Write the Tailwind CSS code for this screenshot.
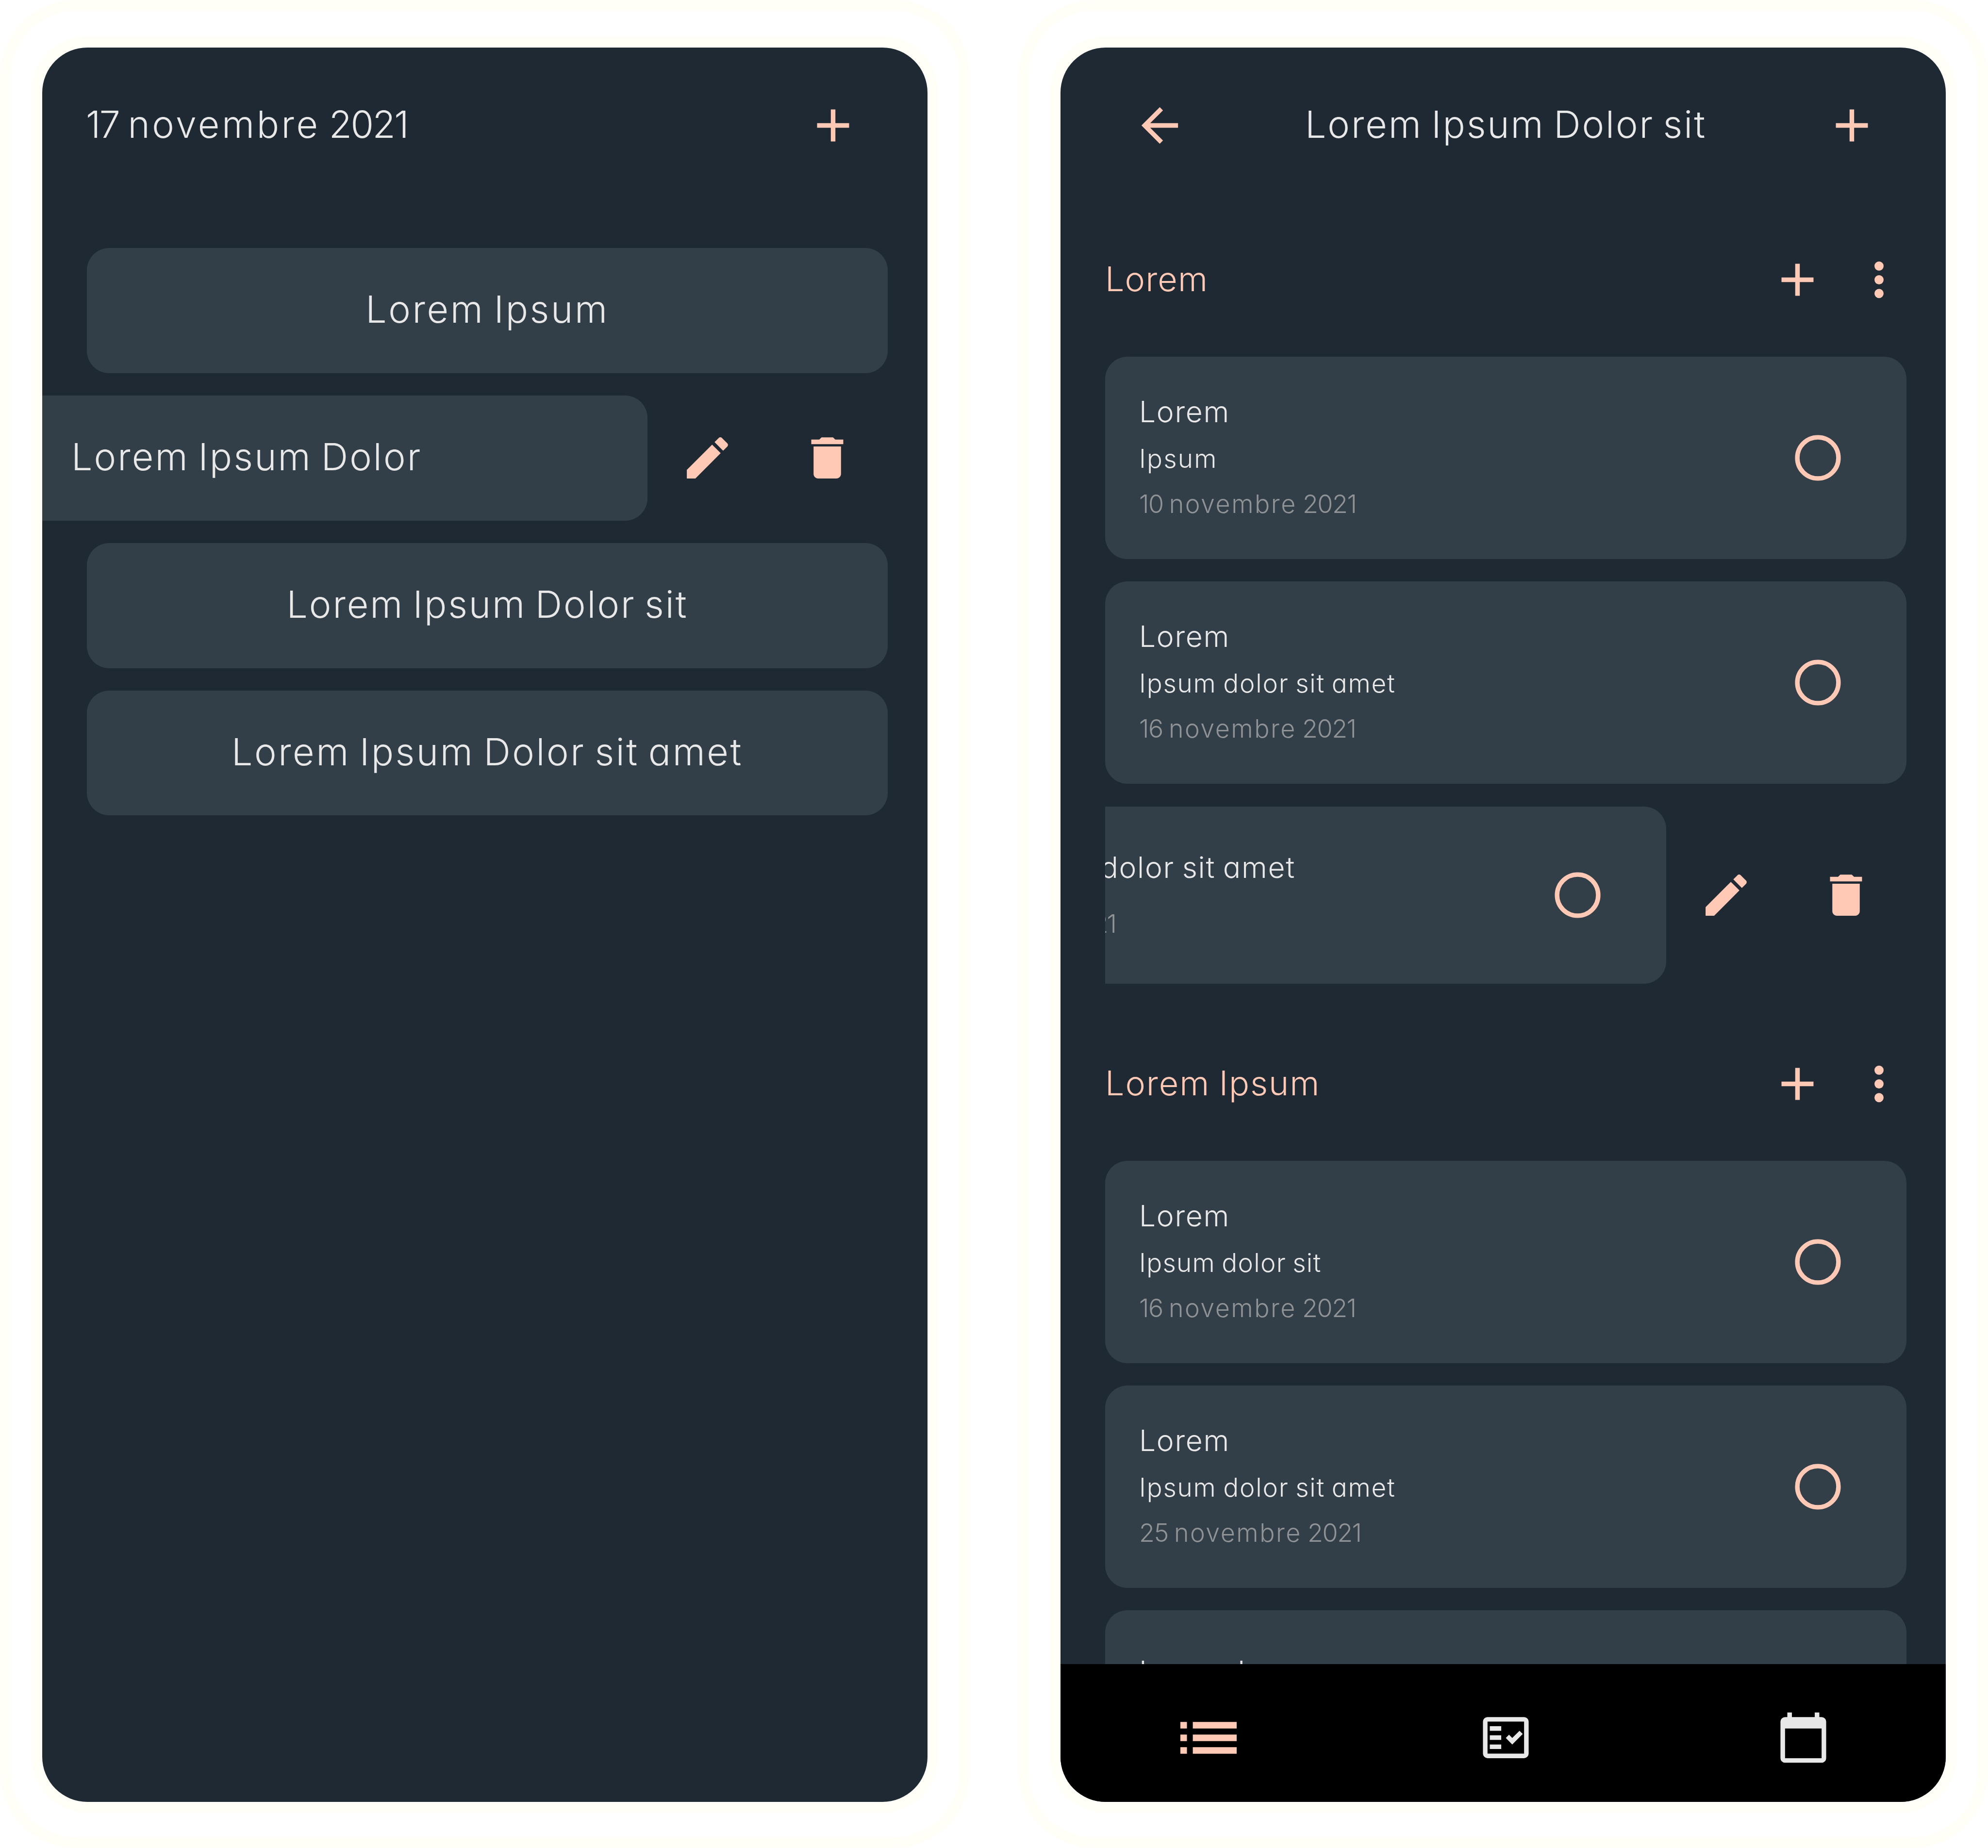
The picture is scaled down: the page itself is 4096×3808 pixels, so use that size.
<!DOCTYPE html>
<html lang="fr">
<head>
<meta charset="utf-8">
<title>Tasks</title>
<script src="https://cdn.jsdelivr.net/npm/@tailwindcss/browser@4"></script>
</head>
<body class="bg-white">
<svg class="hidden">
  <symbol id="add" viewBox="0 0 24 24"><path d="M19 13h-6v6h-2v-6H5v-2h6V5h2v6h6z"/></symbol>
  <symbol id="back" viewBox="0 0 24 24"><path d="M20 11H7.83l5.59-5.59L12 4l-8 8 8 8 1.41-1.41L7.83 13H20z"/></symbol>
  <symbol id="edit" viewBox="0 0 24 24"><path d="M3 17.25V21h3.75L17.81 9.94l-3.75-3.75zM20.71 7.04a1 1 0 0 0 0-1.41l-2.34-2.34a1 1 0 0 0-1.41 0l-1.83 1.83 3.75 3.75z"/></symbol>
  <symbol id="trash" viewBox="0 0 24 24"><path d="M6 19c0 1.100.9 2 2 2h8c1.100 0 2-.9 2-2V7H6zM19 4h-3.500l-1-1h-5l-1 1H5v2h14z"/></symbol>
  <symbol id="dots" viewBox="0 0 24 24"><circle cx="12" cy="6" r="2"/><circle cx="12" cy="12" r="2"/><circle cx="12" cy="18" r="2"/></symbol>
  <symbol id="circle" viewBox="0 0 24 24"><circle cx="12" cy="12" r="9" fill="none" stroke="currentColor" stroke-width="2"/></symbol>
</svg>

<div class="flex h-[3808px] w-[4096px] justify-between overflow-hidden font-[Inter,sans-serif] font-[300] text-[#e8e8e8] [font-feature-settings:'cv11']">

  <!-- Lists screen -->
  <div class="h-[3808px] w-[1998px] rounded-[156px] border-[22px] border-[#fffff7] bg-white px-[43px] pt-[53px] pb-[51px]">
    <div class="h-full rounded-[115px] bg-[#fffff7] px-[22px] pt-[23px] pb-[22px]">
      <div class="h-full overflow-hidden rounded-[93px] bg-[#1f2933]">
        <header class="flex h-[320px] items-center justify-between pr-[138px] pl-[90px]">
          <h1 class="pb-[5px] text-[77px] leading-[120px] tracking-[-2.5px] [word-spacing:-1px]">17 <span class="tracking-[4.5px]">novembre</span> 2021</h1>
          <svg class="size-[113px] fill-[#ffc9b5]"><use href="#add"/></svg>
        </header>
        <main class="mt-[92.500px] flex flex-col gap-[46.200px] text-[77px] leading-[120px] [word-spacing:-6px]">
          <div class="mr-[82px] ml-[92px] flex h-[258px] items-center justify-center rounded-[46px] bg-[#323e48] pb-[5px] tracking-[3.6px]">Lorem Ipsum</div>
          <div class="flex h-[258px] items-center text-[#ffc9b5]">
            <div class="flex h-full w-[1247px] items-center rounded-r-[46px] bg-[#323e48] pb-[5px] pl-[60px] tracking-[3.1px] text-[#e8e8e8]">Lorem Ipsum Dolor</div>
            <svg class="ml-[67px] size-[113px] fill-current"><use href="#edit"/></svg>
            <svg class="ml-[134px] size-[113px] fill-current"><use href="#trash"/></svg>
          </div>
          <div class="mr-[82px] ml-[92px] flex h-[258px] items-center justify-center rounded-[46px] bg-[#323e48] pb-[5px] tracking-[2.9px]">Lorem Ipsum Dolor sit</div>
          <div class="mr-[82px] ml-[92px] flex h-[257px] items-center justify-center rounded-[46px] bg-[#323e48] pb-[5px] tracking-[3.5px]">Lorem Ipsum Dolor sit amet</div>
        </main>
      </div>
    </div>
  </div>

  <!-- Tasks screen -->
  <div class="h-[3808px] w-[1998px] rounded-[156px] border-[22px] border-[#fffff7] bg-white px-[43px] pt-[53px] pb-[51px]">
    <div class="h-full rounded-[115px] bg-[#fffff7] px-[22px] pt-[23px] pb-[22px]">
      <div class="flex h-full flex-col overflow-hidden rounded-[93px] bg-[#1f2933]">
        <header class="flex h-[320px] shrink-0 items-center pr-[137px] pl-[148px]">
          <svg class="size-[113px] fill-[#ffc9b5]"><use href="#back"/></svg>
          <h1 class="flex-1 pb-[5px] text-center text-[77px] leading-[120px] tracking-[2.9px] [word-spacing:-6px]">Lorem Ipsum Dolor sit</h1>
          <svg class="size-[113px] fill-[#ffc9b5]"><use href="#add"/></svg>
        </header>

        <main class="min-h-0 flex-1 overflow-hidden pr-[81px] pl-[92px] [word-spacing:-3px]">
          <section class="mb-[48px] flex flex-col gap-[46.300px]">
            <div class="-mb-[46.300px] flex h-[317px] items-center text-[#ffc9b5]">
              <h2 class="flex-1 pb-[4px] text-[70px] leading-[100px] tracking-[1.1px]">Lorem</h2>
              <svg class="mr-[55px] size-[113px] fill-current"><use href="#add"/></svg>
              <svg class="size-[113px] fill-current"><use href="#dots"/></svg>
            </div>
            <article class="flex h-[417px] items-center justify-between rounded-[46px] bg-[#323e48] pr-[126px] pl-[70px]">
              <div class="h-full pt-[66px]">
                <p class="text-[60.500px] leading-[95px] tracking-[1.7px]">Lorem</p>
                <p class="text-[53px] leading-[98px] tracking-[2.2px]">Ipsum</p>
                <p class="text-[52px] leading-[89px] tracking-[-1.5px] text-[#909396] [word-spacing:-1px]">10 <span class="tracking-[2.5px]">novembre</span> 2021</p>
              </div>
              <svg class="size-[113px] text-[#ffc9b5]"><use href="#circle"/></svg>
            </article>
            <article class="flex h-[417px] items-center justify-between rounded-[46px] bg-[#323e48] pr-[126px] pl-[70px]">
              <div class="h-full pt-[66px]">
                <p class="text-[60.500px] leading-[95px] tracking-[1.7px]">Lorem</p>
                <p class="text-[53px] leading-[98px] tracking-[1.8px]">Ipsum dolor sit amet</p>
                <p class="text-[52px] leading-[89px] tracking-[-1.5px] text-[#909396] [word-spacing:-1px]">16 <span class="tracking-[2.5px]">novembre</span> 2021</p>
              </div>
              <svg class="size-[113px] text-[#ffc9b5]"><use href="#circle"/></svg>
            </article>
            <div class="flex h-[365px] items-center text-[#ffc9b5]">
              <article class="flex h-full w-[1156px] items-center justify-between overflow-hidden rounded-r-[46px] bg-[#323e48] pr-[126px]">
                <div class="-ml-[425px] h-full w-[817px] pt-[78px] whitespace-nowrap">
                  <p class="text-right text-[60.500px] leading-[94px] tracking-[1.7px] text-[#e8e8e8]">Lorem Ipsum dolor sit amet</p>
                  <p class="w-[446px] pt-[25px] text-right text-[52px] leading-[89px] tracking-[-3px] text-[#909396] [word-spacing:-1px]">16 <span class="tracking-[2.5px]">novembre</span> 2021</p>
                </div>
                <svg class="size-[113px]"><use href="#circle"/></svg>
              </article>
              <svg class="ml-[67px] size-[113px] fill-current"><use href="#edit"/></svg>
              <svg class="ml-[134px] size-[113px] fill-current"><use href="#trash"/></svg>
            </div>
          </section>

          <section class="flex flex-col gap-[46.300px]">
            <div class="-mb-[46.300px] flex h-[317px] items-center text-[#ffc9b5]">
              <h2 class="flex-1 pb-[3px] text-[70px] leading-[100px] tracking-[1.9px]">Lorem Ipsum</h2>
              <svg class="mr-[55px] size-[113px] fill-current"><use href="#add"/></svg>
              <svg class="size-[113px] fill-current"><use href="#dots"/></svg>
            </div>
            <article class="flex h-[417px] items-center justify-between rounded-[46px] bg-[#323e48] pr-[126px] pl-[70px]">
              <div class="h-full pt-[66px]">
                <p class="text-[60.500px] leading-[95px] tracking-[1.7px]">Lorem</p>
                <p class="text-[53px] leading-[98px] tracking-[1.3px]">Ipsum dolor sit</p>
                <p class="text-[52px] leading-[89px] tracking-[-1.5px] text-[#909396] [word-spacing:-1px]">16 <span class="tracking-[2.5px]">novembre</span> 2021</p>
              </div>
              <svg class="size-[113px] text-[#ffc9b5]"><use href="#circle"/></svg>
            </article>
            <article class="flex h-[417px] items-center justify-between rounded-[46px] bg-[#323e48] pr-[126px] pl-[70px]">
              <div class="h-full pt-[66px]">
                <p class="text-[60.500px] leading-[95px] tracking-[1.7px]">Lorem</p>
                <p class="text-[53px] leading-[98px] tracking-[1.8px]">Ipsum dolor sit amet</p>
                <p class="text-[52px] leading-[89px] tracking-[-1.5px] text-[#909396] [word-spacing:-1px]">25 <span class="tracking-[2.5px]">novembre</span> 2021</p>
              </div>
              <svg class="size-[113px] text-[#ffc9b5]"><use href="#circle"/></svg>
            </article>
            <article class="h-[365px] rounded-[46px] bg-[#323e48] pt-[79px] pl-[70px]">
              <p class="text-[60.500px] leading-[94px] tracking-[1.7px]">Lorem Ipsum</p>
            </article>
          </section>
        </main>

        <nav class="-ml-[2px] flex h-[284px] shrink-0 bg-black pt-[19px]">
          <div class="flex w-[613px] shrink-0 items-center justify-center">
            <svg class="h-[66px] w-[116px] fill-[#ffc9b5]" viewBox="0 0 129 73"><path d="M0 0h15v15H0zM28.500 0H129v15H28.500zM0 29h15v15H0zM28.500 29H129v15H28.500zM0 58h15v15H0zM28.500 58H129v15H28.500z"/></svg>
          </div>
          <div class="flex w-[613px] shrink-0 items-center justify-center">
            <svg class="size-[113px] fill-[#e8e8e8]" viewBox="0 0 24 24"><path fill-rule="evenodd" d="M20 3H4a2 2 0 0 0-2 2v14a2 2 0 0 0 2 2h16a2 2 0 0 0 2-2V5a2 2 0 0 0-2-2zM4 5h16v14H4z"/><path d="M19.410 10.420 17.990 9l-3.170 3.170-1.410-1.420L12 12.160 14.820 15zM5 7h5v2H5zM5 11h5v2H5zM5 15h5v2H5z"/></svg>
          </div>
          <div class="flex w-[613px] shrink-0 items-center justify-center">
            <svg class="size-[113px] fill-[#e8e8e8]" viewBox="0 0 24 24"><path d="M20 3h-1V1h-2v2H7V1H5v2H4a2 2 0 0 0-2 2v16a2 2 0 0 0 2 2h16a2 2 0 0 0 2-2V5a2 2 0 0 0-2-2zm0 18H4V8h16z"/></svg>
          </div>
        </nav>
      </div>
    </div>
  </div>
</div>
</body>
</html>
